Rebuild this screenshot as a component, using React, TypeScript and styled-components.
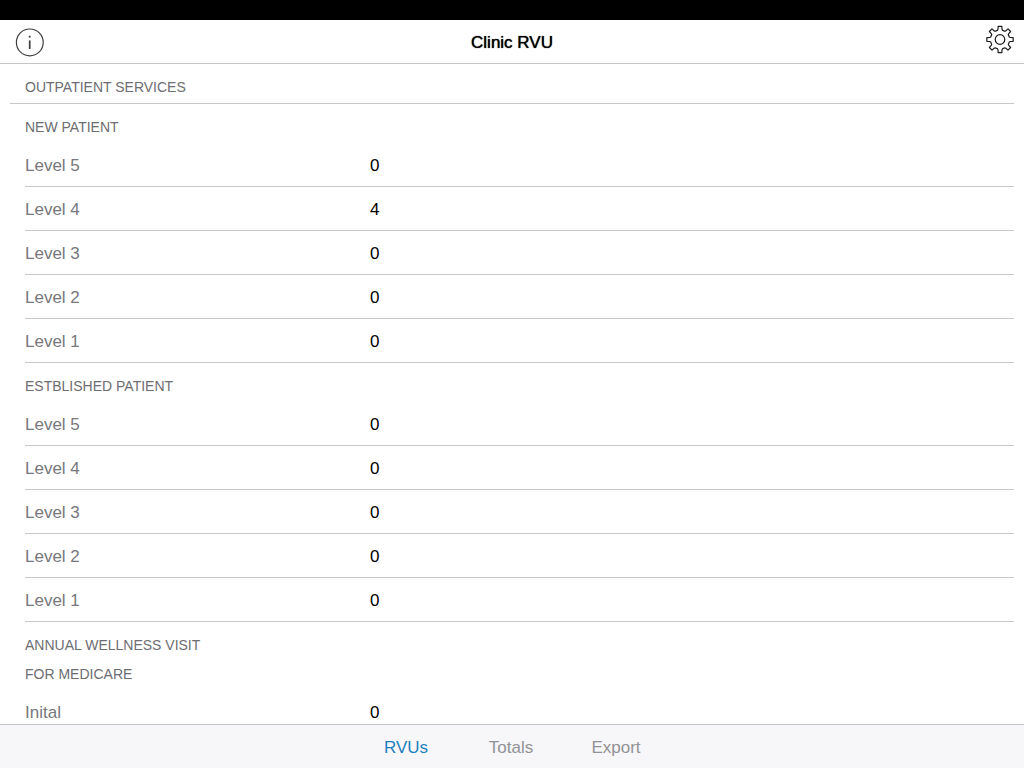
import React, { useState } from "react";
import styled, { createGlobalStyle } from "styled-components";

const GlobalStyle = createGlobalStyle`
  *, *::before, *::after { box-sizing: border-box; }
  body {
    margin: 0;
    background: #fff;
    color: #000;
    font-family: "Liberation Sans", Helvetica, Arial, sans-serif;
    font-size: 17px;
  }
`;

const Screen = styled.div`
  display: flex;
  flex-direction: column;
  height: 100vh;
  overflow: hidden;
`;

const StatusBar = styled.div`
  flex: none;
  height: 20px;
  background: #000;
`;

const NavBar = styled.header`
  flex: none;
  display: grid;
  grid-template-columns: 1fr auto 1fr;
  align-items: start;
  height: 44px;
  padding: 0 9px;
  border-bottom: 1px solid #c3c4c7;
`;

const Title = styled.h1`
  margin: 0;
  padding-top: 2px;
  font-size: 17px;
  line-height: 41px;
  font-weight: 400;
  text-shadow: 0 0 1px #000;
`;

const IconButton = styled.button<{ $end?: boolean }>`
  justify-self: ${(p) => (p.$end ? "end" : "start")};
  display: flex;
  margin: 0;
  padding: ${(p) => (p.$end ? "4px 0 0" : "7px 0 0 6px")};
  border: 0;
  background: none;
  color: ${(p) => (p.$end ? "#1c1c1e" : "#3c3c40")};
`;

const Content = styled.main`
  flex: 1;
  min-height: 0;
  overflow: hidden;
`;

const SectionTitle = styled.h2`
  margin: 0 10px;
  padding: 9px 15px 1px;
  border-bottom: 1px solid #c8c7cc;
  color: #6d6d72;
  font-size: 14px;
  line-height: 29px;
  font-weight: 400;
`;

const Group = styled.section`
  padding: 0 10px 0 25px;
`;

const GroupTitle = styled.h3`
  margin: 0;
  padding: 9px 0 1px;
  color: #6d6d72;
  font-size: 14px;
  line-height: 29px;
  font-weight: 400;
  white-space: pre-line;
`;

const Row = styled.label`
  display: flex;
  align-items: center;
  height: 44px;
  padding-top: 2px;
  border-bottom: 1px solid #c8c7cc;
`;

const RowName = styled.span`
  flex: none;
  width: 345px;
  color: #77777c;
`;

const RowInput = styled.input`
  flex: 1;
  min-width: 0;
  height: 41px;
  padding: 0;
  border: 0;
  outline: 0;
  background: none;
  color: #000;
  font: inherit;
`;

const TabBar = styled.nav`
  flex: none;
  display: flex;
  justify-content: center;
  height: 44px;
  padding-right: 2px;
  border-top: 1px solid #c3c4c7;
  background: #f7f7f9;
`;

const Tab = styled.button<{ $active: boolean }>`
  width: 105px;
  padding: 2px 0 0;
  border: 0;
  background: none;
  color: ${(p) => (p.$active ? "#1d7fc0" : "#929296")};
  font: inherit;
`;

const point = (radius: number, degrees: number) => {
  const a = (degrees * Math.PI) / 180;
  return `${(15 + radius * Math.sin(a)).toFixed(2)} ${(15.5 - radius * Math.cos(a)).toFixed(2)}`;
};

const gearPath =
  Array.from({ length: 8 }, (_, i) => {
    const c = i * 45;
    return [
      `${i === 0 ? "M" : "L"}${point(10.6, c - 11)}`,
      `L${point(13.3, c - 8)}`,
      `L${point(13.3, c + 8)}`,
      `L${point(10.6, c + 11)}`,
      `Q${point(9, c + 15)} ${point(9.7, c + 22.5)}`,
      `Q${point(9, c + 30)} ${point(10.6, c + 34)}`,
    ].join(" ");
  }).join(" ") + "Z";

const GearIcon = () => (
  <svg width="30" height="30" viewBox="0 0 30 30" fill="none" stroke="currentColor" strokeWidth="1.2" strokeLinejoin="round" aria-hidden="true">
    <path d={gearPath} />
    <circle cx="15" cy="15.5" r="4.8" />
  </svg>
);

const InfoIcon = () => (
  <svg width="30" height="30" viewBox="0 0 30 30" fill="none" stroke="currentColor" aria-hidden="true">
    <circle cx="14.8" cy="15.4" r="13.4" strokeWidth="1.2" />
    <path d="M14.7 13.4V22" strokeWidth="1.7" />
    <path d="M14.7 8.8V10.6" strokeWidth="1.8" />
  </svg>
);

const levels = (counts: string[]) =>
  counts.map((value, i) => ({ name: `Level ${5 - i}`, value }));

const groups = [
  { title: "NEW PATIENT", rows: levels(["0", "4", "0", "0", "0"]) },
  { title: "ESTBLISHED PATIENT", rows: levels(["0", "0", "0", "0", "0"]) },
  { title: "ANNUAL WELLNESS VISIT\nFOR MEDICARE", rows: [{ name: "Inital", value: "0" }] },
];

const tabs = ["RVUs", "Totals", "Export"];

export default function App() {
  const [active, setActive] = useState("RVUs");
  return (
    <Screen>
      <GlobalStyle />
      <StatusBar />
      <NavBar>
        <IconButton type="button" aria-label="Information">
          <InfoIcon />
        </IconButton>
        <Title>Clinic RVU</Title>
        <IconButton type="button" aria-label="Settings" $end>
          <GearIcon />
        </IconButton>
      </NavBar>
      <Content>
        <SectionTitle>OUTPATIENT SERVICES</SectionTitle>
        {groups.map((group) => (
          <Group key={group.title}>
            <GroupTitle>{group.title}</GroupTitle>
            {group.rows.map((row) => (
              <Row key={row.name}>
                <RowName>{row.name}</RowName>
                <RowInput type="text" inputMode="numeric" defaultValue={row.value} />
              </Row>
            ))}
          </Group>
        ))}
      </Content>
      <TabBar>
        {tabs.map((tab) => (
          <Tab key={tab} type="button" $active={tab === active} onClick={() => setActive(tab)}>
            {tab}
          </Tab>
        ))}
      </TabBar>
    </Screen>
  );
}
